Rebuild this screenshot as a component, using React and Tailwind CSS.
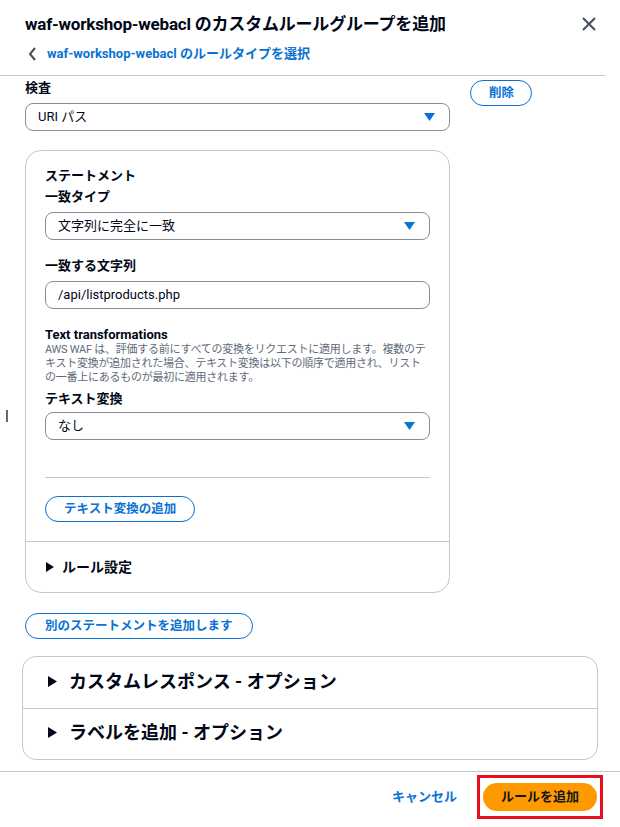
import React from "react";

const font = "font-['Roboto','Noto_Sans_CJK_JP',sans-serif]";

const Caret = () => (
  <svg width="11" height="8" viewBox="0 0 11 8" className="shrink-0">
    <path d="M0 0 H11 L5.5 8 Z" fill="#0972d3" />
  </svg>
);

const Arrow = ({ size = 9 }) => (
  <svg width={size} height={size + 2} viewBox="0 0 9 11" className="shrink-0">
    <path d="M0 0 L9 5.5 L0 11 Z" fill="#000716" />
  </svg>
);

const Select = ({ value, className = "" }) => (
  <div
    className={`h-[28px] flex items-center justify-between pl-[12px] pr-[14px] border border-[#8c8c94] rounded-[8px] bg-white text-[13px] text-[#000716] ${className}`}
  >
    <span>{value}</span>
    <Caret />
  </div>
);

const Label = ({ children, className = "" }) => (
  <div className={`text-[13px] font-bold leading-[20px] text-[#000716] ${className}`}>{children}</div>
);

const PillButton = ({ children, className = "" }) => (
  <button
    className={`h-[26px] px-[18px] rounded-full border border-[#0972d3] text-[12.5px] font-bold text-[#0972d3] bg-white whitespace-nowrap shrink-0 ${className}`}
  >
    {children}
  </button>
);

export default function App() {
  return (
    <div className={`w-[620px] h-[827px] bg-white relative overflow-hidden ${font} text-[#000716]`}>
      {/* header */}
      <div className="px-[25px] pt-[12px] flex items-start justify-between">
        <h1 className="text-[17px] font-bold leading-[24px] tracking-[-0.2px]">
          waf-workshop-webacl のカスタムルールグループを追加
        </h1>
        <svg width="14" height="14" viewBox="0 0 14 14" className="mt-[5px] mr-[-1px]">
          <path d="M1 1 L13 13 M13 1 L1 13" stroke="#414d5c" strokeWidth="2" />
        </svg>
      </div>
      <div className="px-[28px] mt-[8px] flex items-center gap-[10px] h-[20px]">
        <svg width="9" height="14" viewBox="0 0 9 14">
          <path d="M7 1 L2 7 L7 13" stroke="#414d5c" strokeWidth="2" fill="none" />
        </svg>
        <span className="text-[13px] font-bold text-[#0972d3]">waf-workshop-webacl のルールタイプを選択</span>
      </div>
      <div className="w-[605px] h-px bg-[#c6c6cd] mt-[11px]" />

      {/* content */}
      <div className="pl-[25px] flex items-start gap-[20px]">
        <div className="w-[425px] shrink-0">
          <Label className="mt-[2px]">検査</Label>
          <Select value="URI パス" className="mt-[5px]" />

          <div className="mt-[19px] border border-[#c6c6cd] rounded-[16px]">
            <div className="px-[19px] pt-[15px]">
              <Label>ステートメント</Label>
              <Label className="mt-[1px]">一致タイプ</Label>
              <Select value="文字列に完全に一致" className="mt-[5px]" />
              <Label className="mt-[16px]">一致する文字列</Label>
              <div className="mt-[5px] h-[28px] flex items-center pl-[12px] border border-[#8c8c94] rounded-[8px] text-[13px]">
                /api/listproducts.php
              </div>
              <Label className="mt-[16px]">Text transformations</Label>
              <p className="text-[11px] leading-[14px] text-[#5f6b7a] mt-[-2px] tracking-[-0.25px]">
                AWS WAF は、評価する前にすべての変換をリクエストに適用します。複数のテキスト変換が追加された場合、テキスト変換は以下の順序で適用され、リストの一番上にあるものが最初に適用されます。
              </p>
              <Label className="mt-[4px]">テキスト変換</Label>
              <Select value="なし" className="mt-[3px]" />
              <div className="h-px bg-[#c6c6cd] mt-[37px]" />
              <PillButton className="mt-[18px]">テキスト変換の追加</PillButton>
            </div>
            <div className="h-px bg-[#c6c6cd] mt-[19px]" />
            <div className="px-[20px] h-[50px] flex items-center gap-[8px]">
              <Arrow size={8} />
              <span className="text-[14px] font-bold">ルール設定</span>
            </div>
          </div>

          <PillButton className="mt-[20px] h-[25px] px-[19px]">別のステートメントを追加します</PillButton>
        </div>

        <PillButton className="mt-[4px] w-[62px] px-0">削除</PillButton>
      </div>

      {/* options */}
      <div className="ml-[22px] mr-[22px] mt-[17px] border border-[#c6c6cd] rounded-[14px]">
        <div className="h-[51px] flex items-center gap-[12px] px-[25px] pb-[3px]">
          <Arrow />
          <span className="text-[18px] font-bold">カスタムレスポンス - オプション</span>
        </div>
        <div className="h-px bg-[#c6c6cd]" />
        <div className="h-[50px] flex items-center gap-[12px] px-[25px] pb-[3px]">
          <Arrow />
          <span className="text-[18px] font-bold">ラベルを追加 - オプション</span>
        </div>
      </div>

      {/* footer */}
      <div className="h-px bg-[#c6c6cd] mt-[11px]" />
      <div className="flex items-center justify-end pr-[17px] mt-[3px] gap-[20px]">
        <span className="text-[13px] font-bold text-[#0972d3]">キャンセル</span>
        <div className="border-[3px] border-[#e8101e] px-[3px] py-[5px]">
          <button className="h-[28px] w-[114px] rounded-full bg-[#ff9900] text-[13px] font-bold text-[#0f141a]">
            ルールを追加
          </button>
        </div>
      </div>

      {/* resize handle mark */}
      <div className="absolute left-[6px] top-[410px] w-[2px] h-[12px] bg-[#5f6b7a]" />
    </div>
  );
}
